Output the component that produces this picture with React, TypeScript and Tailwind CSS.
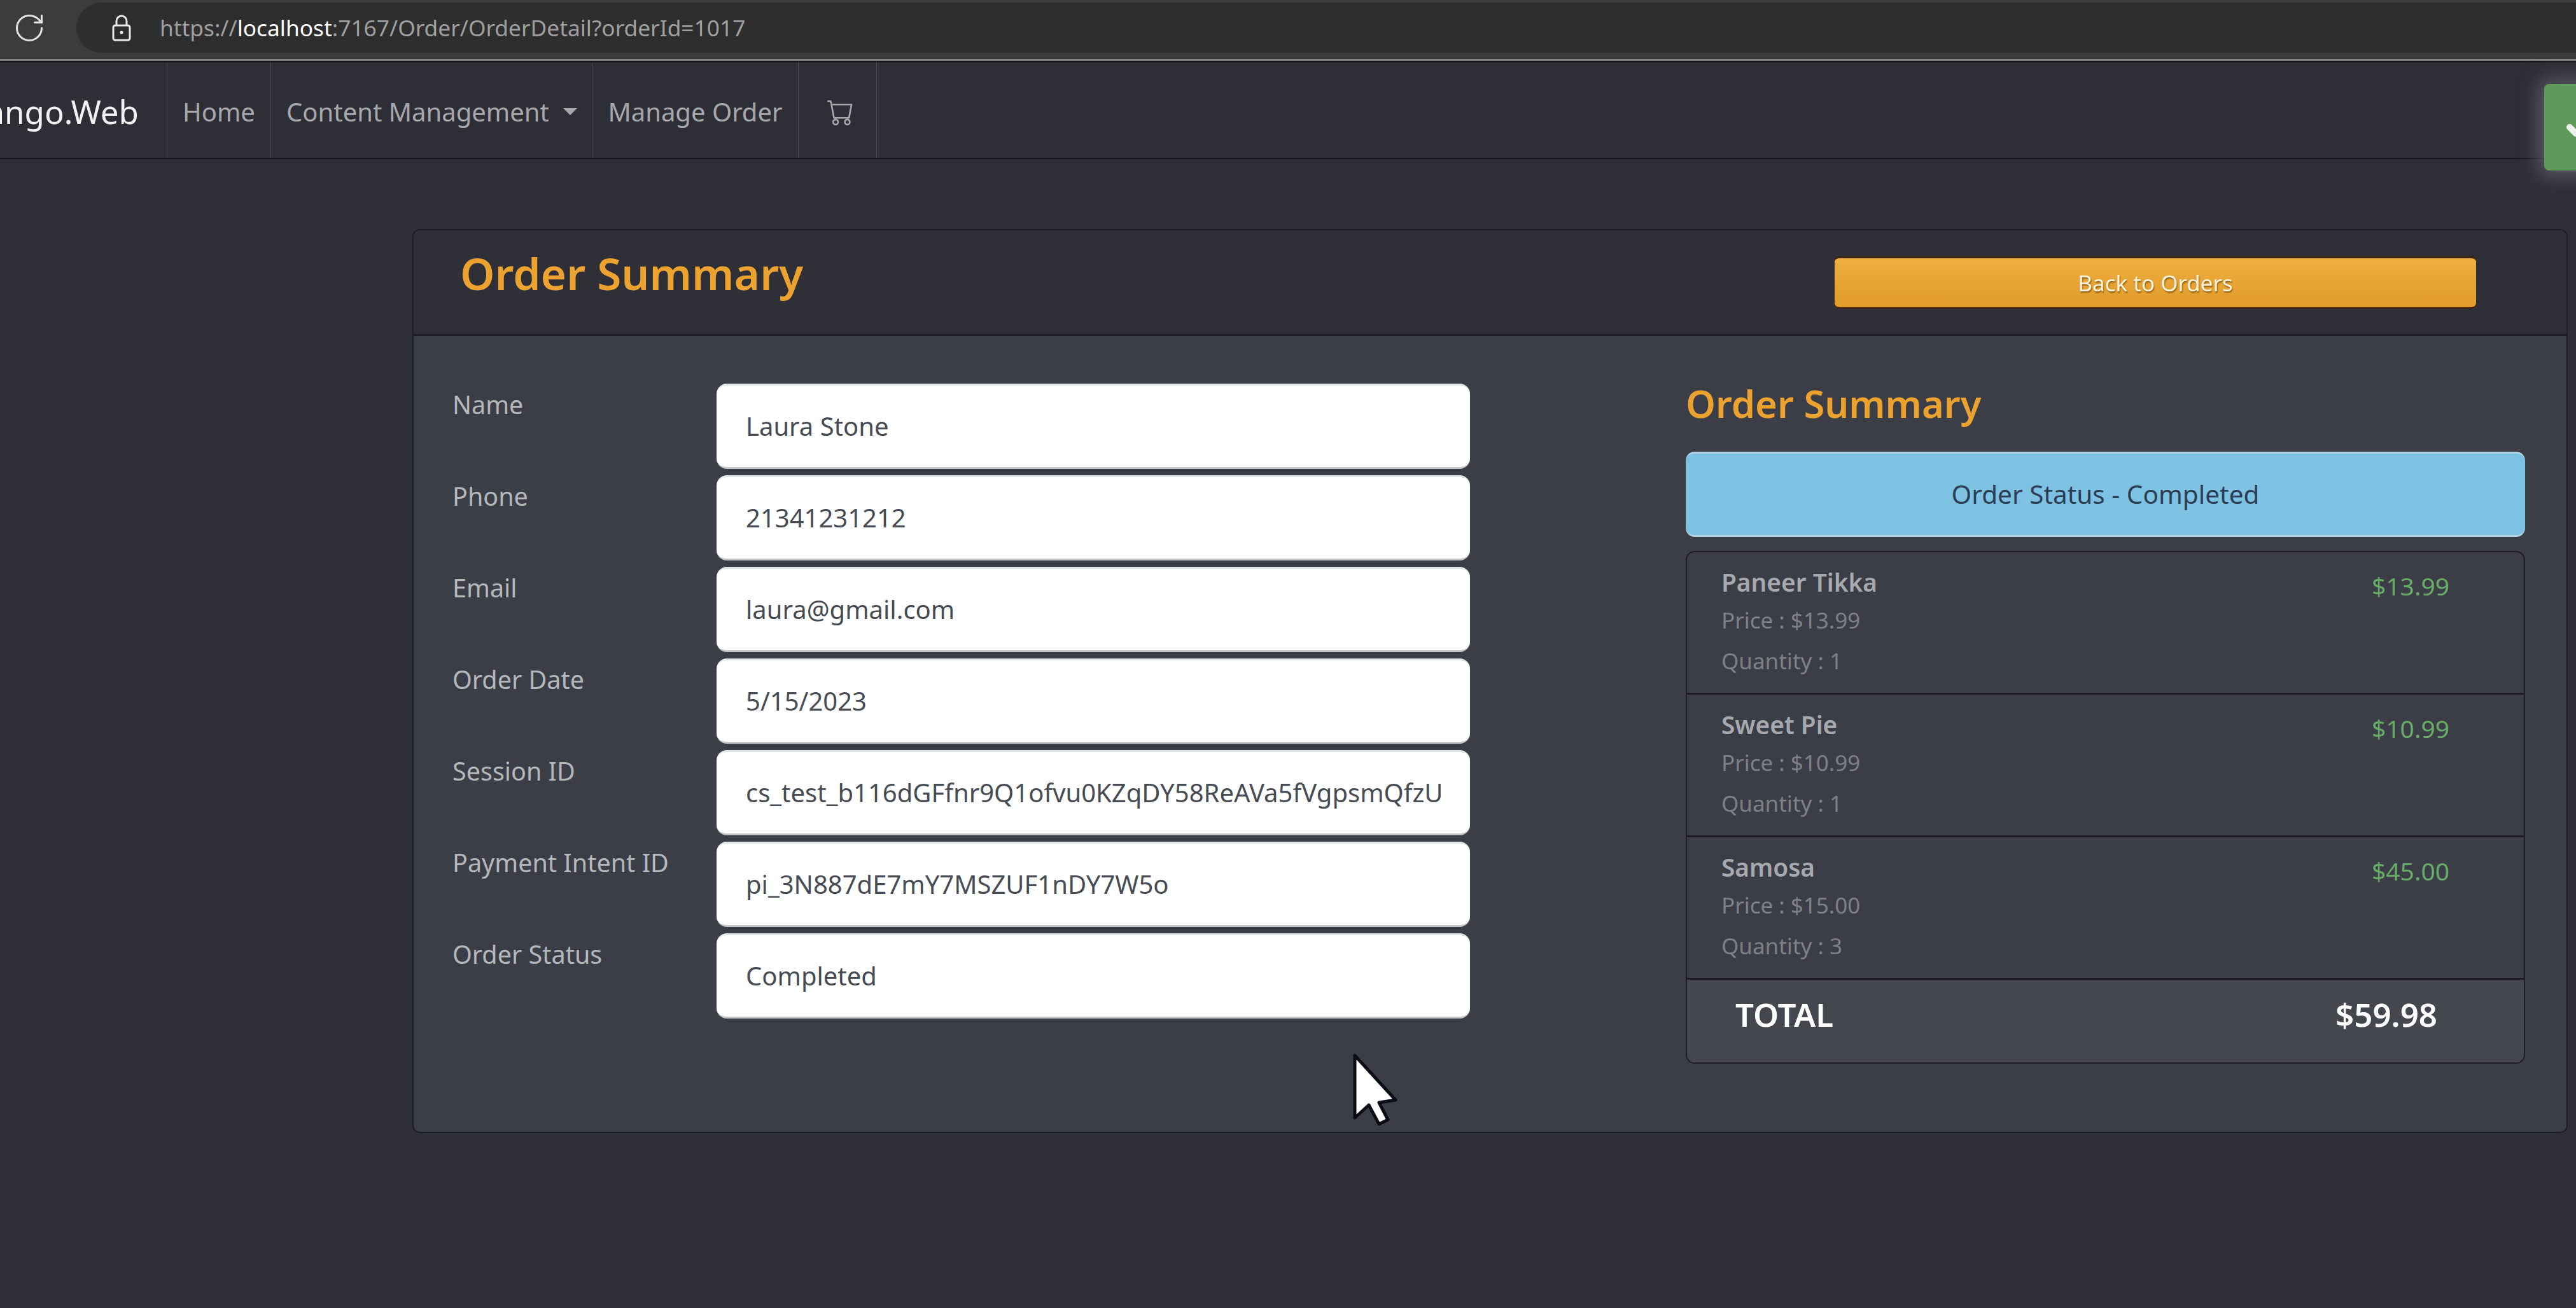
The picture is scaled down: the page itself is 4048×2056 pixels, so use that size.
import React from 'react'
import { BsCart } from 'react-icons/bs'
import { RotateCw, Check } from 'lucide-react'

const fields = [
  { label: 'Name', value: 'Laura Stone' },
  { label: 'Phone', value: '21341231212' },
  { label: 'Email', value: 'laura@gmail.com' },
  { label: 'Order Date', value: '5/15/2023' },
  { label: 'Session ID', value: 'cs_test_b116dGFfnr9Q1ofvu0KZqDY58ReAVa5fVgpsmQfzU' },
  { label: 'Payment Intent ID', value: 'pi_3N887dE7mY7MSZUF1nDY7W5o' },
  { label: 'Order Status', value: 'Completed' },
]

const items = [
  { name: 'Paneer Tikka', price: '$13.99', quantity: 1, total: '$13.99' },
  { name: 'Sweet Pie', price: '$10.99', quantity: 1, total: '$10.99' },
  { name: 'Samosa', price: '$15.00', quantity: 3, total: '$45.00' },
]

const LockIcon = () => (
  <svg width="32" height="42" viewBox="0 0 32 42" fill="none" stroke="#e8e8e8" strokeWidth="3">
    <path d="M8 17V10a8 8 0 0 1 16 0v7" />
    <rect x="3" y="17" width="26" height="23" rx="3" />
    <circle cx="16" cy="28" r="2.5" fill="#e8e8e8" stroke="none" />
  </svg>
)

const NavItem = ({ children, className = '' }: { children: React.ReactNode; className?: string }) => (
  <div className={`flex h-full items-center border-r border-[#494a52] pt-[5px] ${className}`}>{children}</div>
)

const App = () => {
  return (
    <div className="relative h-[2056px] w-[4048px] overflow-hidden bg-[#2f2f39] font-['Noto_Sans',sans-serif]">
      {/* browser chrome */}
      <div className="flex h-[96px] items-start border-b-[3px] border-[#7c7c7c] bg-[#3c3c3c] pt-[4px]">
        <div className="flex h-[79px] w-[120px] items-center pl-[20px]">
          <RotateCw size={52} strokeWidth={1.4} color="#e4e4e4" />
        </div>
        <div className="flex h-[79px] flex-1 items-center rounded-l-[40px] bg-[#2e2e2e] pl-[55px]">
          <LockIcon />
          <div className="ml-[44px] text-[35.3px] text-[#a0a0a0]">
            https://<span className="text-white">localhost</span>:7167/Order/OrderDetail?orderId=1017
          </div>
        </div>
      </div>

      {/* navbar */}
      <div className="flex h-[154px] items-center border-y-2 border-b-[#16161f] border-t-[#18181c] bg-[#2e2e37] text-[40px] text-[#a8a8ac]">
        <NavItem className="w-[263px] justify-end overflow-hidden whitespace-nowrap pr-[44px] text-[51px] text-[#f2f2f2]">
          <span>Mango.Web</span>
        </NavItem>
        <NavItem className="w-[163px] justify-center">Home</NavItem>
        <NavItem className="w-[505px] pl-[24px]">
          Content Management
          <span className="ml-[22px] h-0 w-0 border-x-[11px] border-t-[11px] border-x-transparent border-t-[#a8a8ac]" />
        </NavItem>
        <NavItem className="w-[324px] justify-center">Manage Order</NavItem>
        <NavItem className="w-[123px] justify-center pl-[10px]">
          <BsCart size={42} />
        </NavItem>
      </div>

      {/* order card */}
      <div className="ml-[648px] mt-[110px] w-[3387px] overflow-hidden rounded-[12px] border-2 border-[#1e1e29] bg-[#3c3e47]">
        <div className="flex h-[166px] items-center justify-between border-b-[3px] border-[#1c1c27] bg-[#2f2f38] pl-[73px] pr-[142px]">
          <h2 className="mb-[28px] text-[69.3px] font-semibold text-[#eba22f]">Order Summary</h2>
          <button className="h-[82px] w-[1008px] rounded-[8px] border-t-[3px] border-b-[2px] border-t-[#3f2000] border-b-[#3f2000] bg-gradient-to-b from-[#efae40] to-[#e09b29] pt-[3px] text-[35px] text-[#fdf3dc] [text-shadow:1px_2px_2px_#8a5a10]">
            Back to Orders
          </button>
        </div>

        <div className="flex h-[1251px] pt-[75px]">
          <div className="ml-[61px] flex w-[1600px] flex-col gap-[10px]">
            {fields.map((field) => (
              <div key={field.label} className="flex h-[134px]">
                <div className="w-[415px] pt-[4px] text-[39.5px] text-[#b5b7bb]">{field.label}</div>
                <div className="flex h-full w-[1184px] items-center rounded-[16px] border-y-[3px] border-b-[#c4c5c9] border-t-[#e2e3e6] bg-white px-[46px] text-[40px] text-[#474b53]">
                  <span className="block min-w-0 overflow-hidden whitespace-nowrap">{field.value}</span>
                </div>
              </div>
            ))}
          </div>

          <div className="ml-[338px] mt-[-11px] w-[1319px]">
            <h3 className="mb-[34px] text-[59.7px] font-semibold leading-[84px] text-[#eba22f]">Order Summary</h3>
            <div className="flex h-[134px] items-center justify-center rounded-[14px] border-y-[3px] border-y-[#b6d3e6] bg-[#7dc1e3] text-[40.5px] text-[#2b3e55]">
              Order Status - Completed
            </div>
            <div className="mt-[22px] overflow-hidden rounded-[14px] border-2 border-[#1e1e29]">
              {items.map((item) => (
                <div key={item.name} className="flex h-[224px] items-start justify-between border-b-[3px] border-[#1c1c27] pl-[54px] pr-[117px] pt-[22px]">
                  <div>
                    <div className="text-[38.8px] font-semibold leading-[50px] text-[#a8a9ae]">{item.name}</div>
                    <div className="mt-[11px] text-[35px] leading-[48px] text-[#7f8086]">Price : {item.price}</div>
                    <div className="mt-[16px] text-[35px] leading-[48px] text-[#7f8086]">Quantity : {item.quantity}</div>
                  </div>
                  <div className="pt-[6px] text-[39px] leading-[50px] text-[#68ab68]">{item.total}</div>
                </div>
              ))}
              <div className="flex h-[130px] items-start justify-between bg-[#45474f] pl-[76px] pr-[136px] pt-[24px] text-[51px] font-semibold leading-[60px] text-white">
                <span>TOTAL</span>
                <span>$59.98</span>
              </div>
            </div>
          </div>
        </div>
      </div>

      {/* toast cut off by the right edge */}
      <div className="absolute left-[3998px] top-[132px] flex h-[136px] w-[300px] items-center rounded-[8px] bg-[#5f9a5c] pl-[32px] shadow-[0_0_30px_8px_#5a5c63]">
        <Check size={48} strokeWidth={5} color="#eef2ec" />
      </div>

      {/* mouse pointer */}
      <svg className="absolute left-[2125px] top-[1655px]" width="72" height="116" viewBox="0 0 72 116">
        <path
          d="M4 4V102L26 82L42 112L56 105L42 78L68 74Z"
          fill="#ffffff"
          stroke="#0c0c14"
          strokeWidth="5"
          strokeLinejoin="round"
        />
      </svg>
    </div>
  )
}

export default App
